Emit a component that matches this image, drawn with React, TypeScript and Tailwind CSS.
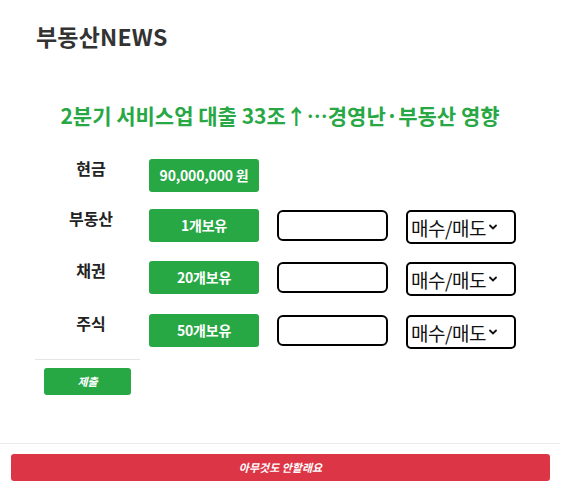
import React from "react";

const font = { fontFamily: '"Noto Sans CJK KR", "Noto Sans", sans-serif' };

function Chevron() {
  return (
    <svg width="8" height="6" viewBox="0 0 8 6" className="ml-[3px]">
      <path d="M1 1.5 L4 4.5 L7 1.5" stroke="#111" strokeWidth="1.8" fill="none" strokeLinecap="round" />
    </svg>
  );
}

function Row({ label, badge, withInputs, h }: { label: string; badge: string; withInputs: boolean; h: string }) {
  return (
    <div className={`flex items-start ${h}`}>
      <div className="w-[114px] pr-[2px] text-center text-[16px] font-bold text-[#222] leading-[16px] mt-[1px]">{label}</div>
      <div className="w-[110px] h-[33px] rounded-[3px] bg-[#28a745] text-white text-[14px] font-bold flex items-center justify-center tracking-[-0.2px]">
        {badge}
      </div>
      {withInputs && (
        <>
          <div className="ml-[18px] w-[111px] h-[31px] rounded-[6px] border-2 border-black bg-white mt-[1px]" />
          <div className="ml-[18px] w-[110px] h-[34px] rounded-[5px] border-2 border-black bg-white flex items-center pl-[3px] mt-[1px]">
            <span className="text-[19px] text-[#111] leading-none tracking-[-0.5px]">매수/매도</span>
            <Chevron />
          </div>
        </>
      )}
    </div>
  );
}

export default function App() {
  return (
    <div className="w-[571px] h-[490px] bg-white" style={font}>
      <div className="w-[560px] h-[490px] bg-white">
        <div className="pl-[36px] pt-[21px] h-[60px]">
          <h1 className="text-[23px] font-bold text-[#333] leading-[30px] tracking-[0.2px]">부동산NEWS</h1>
        </div>
        <div className="pt-[40px] text-center">
          <div className="text-[21px] font-bold text-[#28a745] leading-[30px]">
            2분기 서비스업 대출 33조↑…경영난·부동산 영향
          </div>
        </div>
        <div className="pl-[35px] mt-[29px]">
          <Row label="현금" badge="90,000,000 원" withInputs={false} h="h-[50px]" />
          <Row label="부동산" badge="1개보유" withInputs h="h-[52px]" />
          <Row label="채권" badge="20개보유" withInputs h="h-[53px]" />
          <Row label="주식" badge="50개보유" withInputs h="h-[45px]" />
          <div className="w-[105px] border-t border-[#e5e5e5]" />
          <div className="ml-[9px] mt-[8px] w-[87px] h-[27px] rounded-[3px] bg-[#28a745] text-white text-[11px] font-bold italic flex items-center justify-center">
            제출
          </div>
        </div>
        <div className="mt-[48px] border-t border-[#e9ecef]" />
        <div className="px-[11px] pt-[10px]">
          <div className="w-[539px] h-[27px] rounded-[3px] bg-[#dc3545] text-white text-[11px] font-bold italic flex items-center justify-center">
            아무것도 안할래요
          </div>
        </div>
      </div>
    </div>
  );
}
